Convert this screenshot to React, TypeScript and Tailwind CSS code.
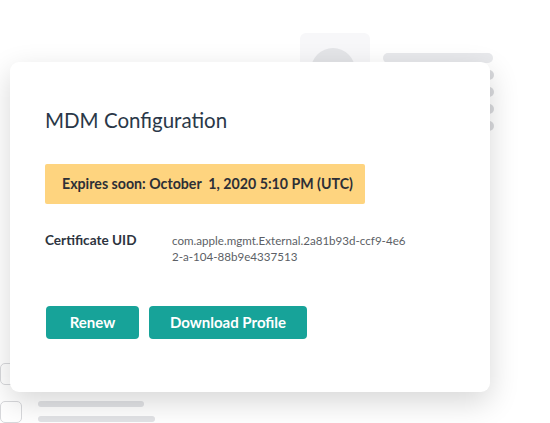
import React from "react";

export default function App() {
  return (
    <div
      className="relative w-[550px] h-[423px] overflow-hidden bg-white"
      style={{ fontFamily: "Lato, 'Open Sans', sans-serif" }}
    >
      {/* background decorations */}
      <div className="absolute left-[300px] top-[33px] w-[70px] h-[80px] rounded-md bg-[#f7f7f9]" />
      <div className="absolute left-[311px] top-[48px] w-[44px] h-[44px] rounded-full bg-[#e4e5e8]" />
      <div className="absolute left-[383px] top-[53px] w-[110px] h-[10px] rounded-full bg-[#e8e9ec]" />
      <div className="absolute left-[484px] top-[70px] flex flex-col gap-[7px]">
        <div className="w-[10px] h-[10px] rounded-full bg-[#d9dadd]" />
        <div className="w-[10px] h-[10px] rounded-full bg-[#d9dadd]" />
        <div className="w-[10px] h-[10px] rounded-full bg-[#d9dadd]" />
        <div className="w-[10px] h-[10px] rounded-full bg-[#d9dadd]" />
      </div>
      <div className="absolute left-[0px] top-[363px] w-[22px] h-[22px] rounded-[5px] border-[1.5px] border-[#d8d9dc]" />
      <div className="absolute left-[0px] top-[401px] w-[22px] h-[22px] rounded-[5px] border-[1.5px] border-[#d8d9dc]" />
      <div className="absolute left-[38px] top-[401px] w-[106px] h-[6px] rounded-full bg-[#e2e3e6]" />
      <div className="absolute left-[38px] top-[416px] w-[117px] h-[6px] rounded-full bg-[#e2e3e6]" />

      {/* card */}
      <div className="relative ml-[10px] mt-[62px] w-[480px] h-[330px] rounded-[9px] bg-white shadow-[0_10px_30px_rgba(0,0,0,0.16)] pl-[35px] pt-[44px]">
        <h1 className="text-[20.5px] leading-[28px] text-[#2a3848] font-normal">
          MDM Configuration
        </h1>
        <div className="mt-[30px] w-[320px] h-[40px] rounded-[2px] bg-[#fed47f] flex items-center pl-[17px]">
          <span className="text-[14.2px] font-bold text-[#2d2f36] whitespace-pre">
            Expires soon: October  1, 2020 5:10 PM (UTC)
          </span>
        </div>
        <div className="mt-[26px] flex">
          <div className="w-[127px] text-[13.6px] leading-[20px] font-bold text-[#2d3440]">
            Certificate UID
          </div>
          <div className="text-[11.6px] leading-[16px] text-[#5c5f66] pt-[3px]">
            <div>com.apple.mgmt.External.2a81b93d-ccf9-4e6</div>
            <div>2-a-104-88b9e4337513</div>
          </div>
        </div>
        <div className="mt-[41px] ml-px flex gap-[10px]">
          <button className="w-[93px] h-[33px] rounded-[4px] bg-[#17a399] text-white text-[15px] font-bold">
            Renew
          </button>
          <button className="w-[158px] h-[33px] rounded-[4px] bg-[#17a399] text-white text-[15px] font-bold">
            Download Profile
          </button>
        </div>
      </div>
    </div>
  );
}
